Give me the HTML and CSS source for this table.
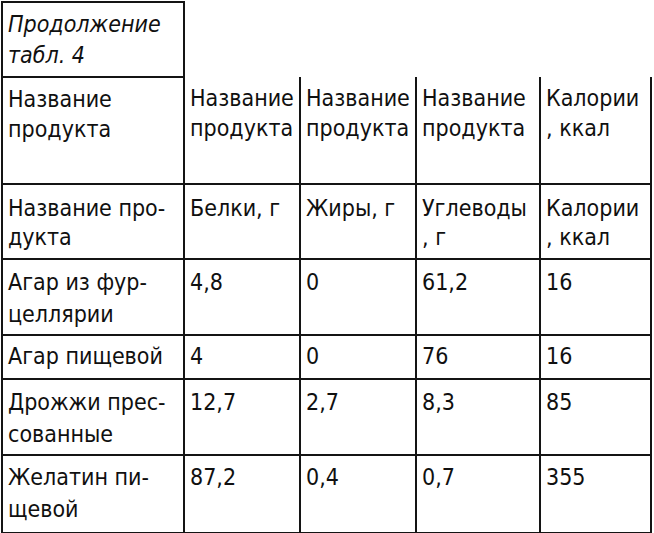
FILE: index.html
```html
<!DOCTYPE html>
<html lang="ru">
<head>
<meta charset="utf-8">
<title>Продолжение табл. 4</title>
<link rel="stylesheet" href="styles.css">
</head>
<body>
<table class="tbl">
  <colgroup>
    <col class="c1"><col class="c2"><col class="c3"><col class="c4"><col class="c5">
  </colgroup>
  <tr class="r0">
    <td class="caption">Продолжение<br>табл. 4</td>
    <td class="blank" colspan="4"></td>
  </tr>
  <tr class="r1">
    <td>Название<br>продукта</td>
    <td class="notop">Название<br>продукта</td>
    <td class="notop">Название<br>продукта</td>
    <td class="notop">Название<br>продукта</td>
    <td class="notop">Калории<br>, ккал</td>
  </tr>
  <tr class="r2">
    <td>Название про-<br>дукта</td>
    <td>Белки, г</td>
    <td>Жиры, г</td>
    <td>Углеводы<br>, г</td>
    <td>Калории<br>, ккал</td>
  </tr>
  <tr class="r3">
    <td>Агар из фур-<br>целлярии</td>
    <td>4,8</td>
    <td>0</td>
    <td>61,2</td>
    <td>16</td>
  </tr>
  <tr class="r4">
    <td>Агар пищевой</td>
    <td>4</td>
    <td>0</td>
    <td>76</td>
    <td>16</td>
  </tr>
  <tr class="r5">
    <td>Дрожжи прес-<br>сованные</td>
    <td>12,7</td>
    <td>2,7</td>
    <td>8,3</td>
    <td>85</td>
  </tr>
  <tr class="r6">
    <td>Желатин пи-<br>щевой</td>
    <td>87,2</td>
    <td>0,4</td>
    <td>0,7</td>
    <td>355</td>
  </tr>
</table>
</body>
</html>
```
FILE: styles.css
```css
html, body {
  margin: 0;
  padding: 0;
  background: #ffffff;
}

body {
  padding: 1px 0 0 1px;
}

.tbl {
  border-collapse: collapse;
  table-layout: fixed;
  width: 651px;
  font-family: "DejaVu Sans Condensed", "DejaVu Sans", sans-serif;
  font-stretch: condensed;
  font-size: 23px;
  color: #101010;
}

.c1 { width: 182px; }
.c2 { width: 116px; }
.c3 { width: 116px; }
.c4 { width: 124px; }
.c5 { width: 111px; }

.tbl td {
  border: 2px solid #141414;
  padding: 5px 3px 5px 5px;
  vertical-align: top;
  line-height: 32px;
  white-space: nowrap;
  overflow: hidden;
}

.tbl td.blank {
  border: none;
  padding: 0;
}

.tbl td.notop {
  border-top: none;
}

.tbl td.caption {
  font-style: italic;
  line-height: 31px;
  padding-top: 6px;
  padding-bottom: 5px;
}

.r1 td {
  line-height: 30px;
  padding-top: 6px;
  padding-bottom: 39px;
}

.r2 td {
  line-height: 29px;
  padding-top: 9px;
  padding-bottom: 6px;
}

.r3 td {
  padding-top: 6px;
  padding-bottom: 4px;
}

.r4 td {
  padding-top: 4px;
  padding-bottom: 6px;
}

.r5 td {
  padding-top: 6px;
  padding-bottom: 4px;
}

.r6 td {
  padding-top: 5px;
  padding-bottom: 7px;
}
```
